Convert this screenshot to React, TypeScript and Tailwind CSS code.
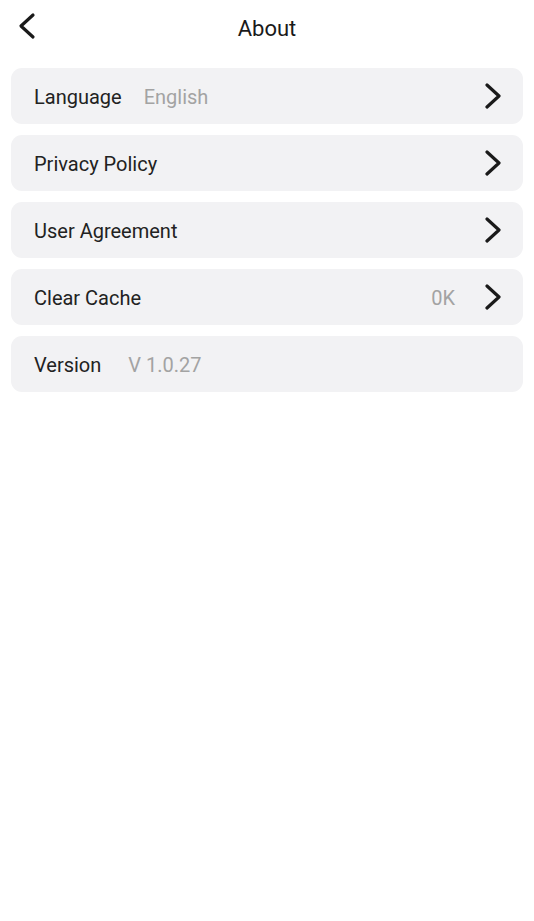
import React from "react";

const Chevron = () => (
  <svg width="18" height="26" viewBox="0 0 18 26" className="shrink-0">
    <path d="M3 2 L15 13 L3 24" fill="none" stroke="#1a1a1a" strokeWidth="3.2" strokeLinecap="round" strokeLinejoin="round" />
  </svg>
);

type Row = { label: string; value?: string; gap?: string; right?: string; arrow: boolean };

const rows: Row[] = [
  { label: "Language", value: "English", arrow: true },
  { label: "Privacy Policy", arrow: true },
  { label: "User Agreement", arrow: true },
  { label: "Clear Cache", right: "0K", arrow: true },
  { label: "Version", value: "V 1.0.27", arrow: false },
];

export default function App() {
  return (
    <div className="w-[534px] h-[921px] bg-white" style={{ fontFamily: "Roboto, 'Noto Sans', sans-serif" }}>
      <div className="relative h-[56px] flex items-center justify-center">
        <svg width="18" height="28" viewBox="0 0 18 28" className="absolute left-[18px] top-[12px]">
          <path d="M15 3 L3 14 L15 25" fill="none" stroke="#1a1a1a" strokeWidth="3.2" strokeLinecap="round" strokeLinejoin="round" />
        </svg>
        <span className="text-[22px] text-[#1a1a1a]">About</span>
      </div>
      <div className="flex flex-col gap-[11px] px-[11px] pt-[12px]">
        {rows.map((r) => (
          <div key={r.label} className="h-[56px] rounded-[11px] bg-[#f2f2f4] flex items-center pl-[23px] pr-[21px]">
            <span className="text-[20px] text-[#222222] pt-[2px]">{r.label}</span>
            {r.value && (
              <span className={`text-[20px] text-[#a3a3a3] pt-[2px] ${r.label === "Version" ? "ml-[27px]" : "ml-[22px]"}`}>
                {r.value}
              </span>
            )}
            <div className="flex-1" />
            {r.right && <span className="text-[20px] text-[#a3a3a3] mr-[29px] pt-[2px]">{r.right}</span>}
            {r.arrow && <Chevron />}
          </div>
        ))}
      </div>
    </div>
  );
}
